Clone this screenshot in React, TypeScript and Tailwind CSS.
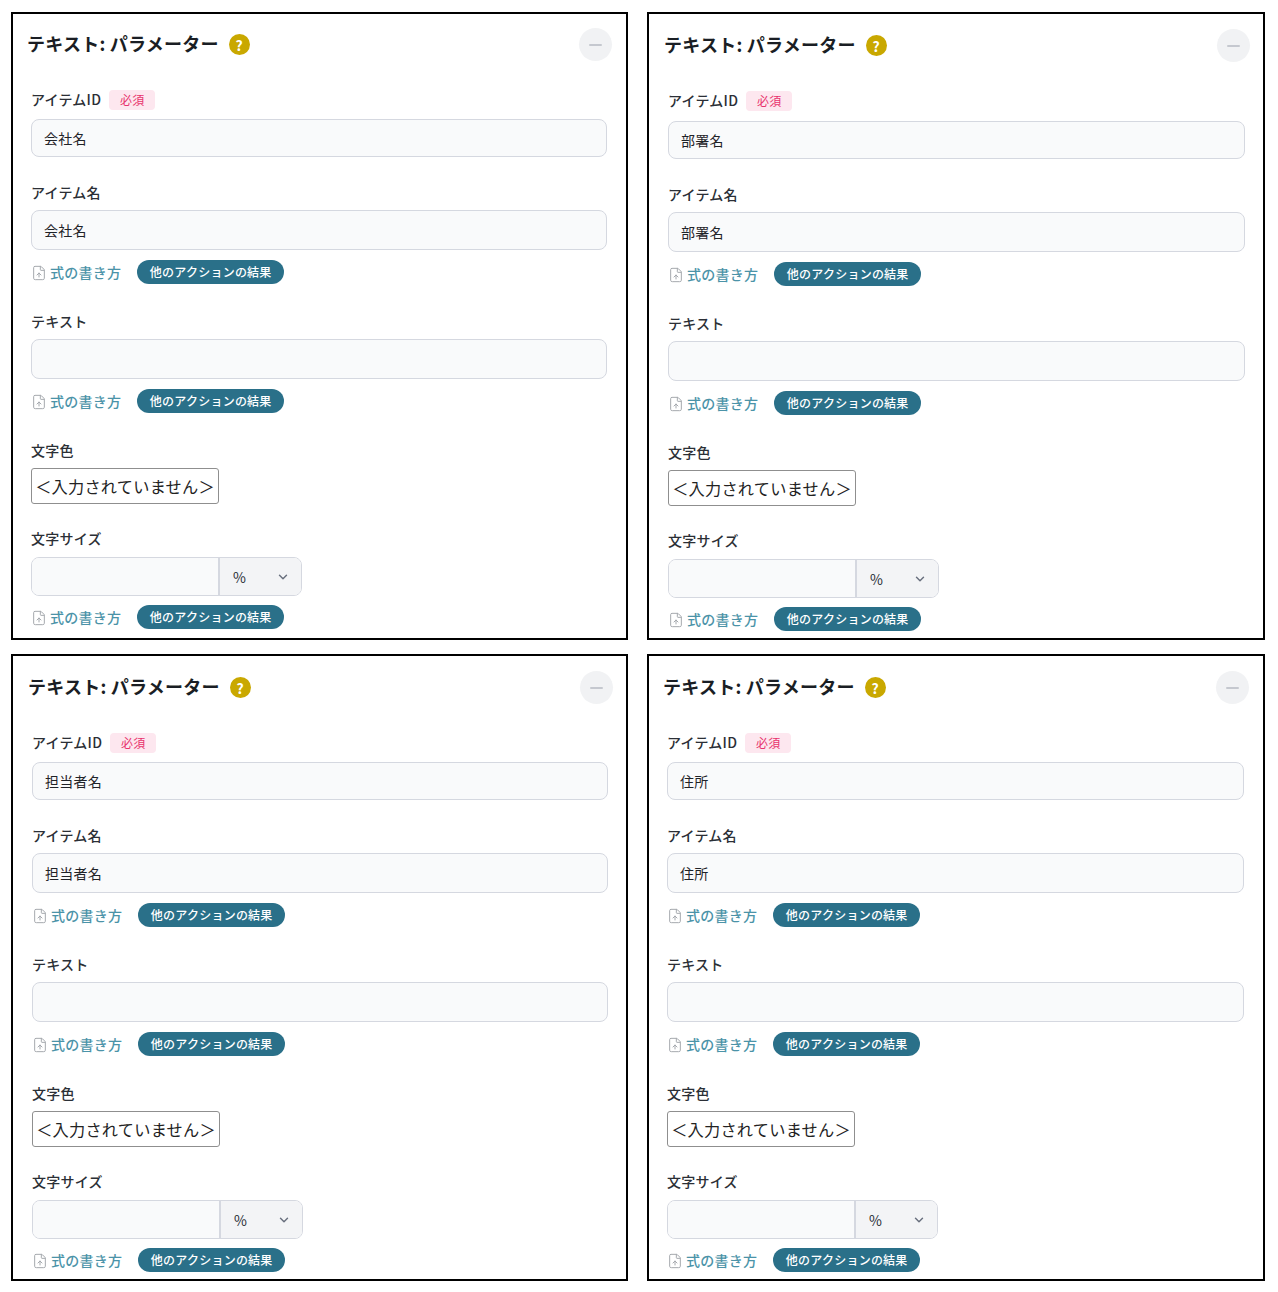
import { ChevronDown, FileUp } from "lucide-react";

const font = "font-['Noto_Sans_CJK_JP','Noto_Sans',sans-serif]";

function Label({ text, className }: { text: string; className: string }) {
  return <div className={`flex h-5 items-center pb-0.5 text-sm font-medium text-[#2b2f36] ${className}`}>{text}</div>;
}

function Field({ value, className }: { value?: string; className: string }) {
  return (
    <div className={`flex items-center rounded-lg border border-[#d5d8e0] bg-[#f9fafb] px-3 text-sm text-[#1f2328] ${className}`}>
      {value}
    </div>
  );
}

function Links({ className }: { className: string }) {
  return (
    <div className={`flex h-6 items-center ${className}`}>
      <FileUp size={16} strokeWidth={1.5} className="mt-0.5 mr-[3px] text-[#a5a9ae]" />
      <span className="text-sm font-medium text-[#4b93a8]">式の書き方</span>
      <span className="ml-4 flex h-6 w-[147px] items-center justify-center rounded-full bg-[#2a7089] text-xs font-medium text-white">
        他のアクションの結果
      </span>
    </div>
  );
}

type PanelProps = { name: string; className: string; firstGap: string };

function Panel({ name, className, firstGap }: PanelProps) {
  return (
    <div className={`flex flex-col border-2 border-black bg-white ${className}`}>
      <div className="-ml-1 -mr-[5px] flex h-[33px] items-center justify-between">
        <div className="flex items-center gap-2.5">
          <span className="pb-1 text-lg leading-none font-bold text-[#1a1e24]">テキスト: パラメーター</span>
          <span className="flex h-[21px] w-[21px] items-center justify-center rounded-full bg-[#c9a800] text-sm font-bold text-white">?</span>
        </div>
        <button className="flex h-[33px] w-[33px] items-center justify-center rounded-full bg-[#f1f2f4]">
          <span className="h-0.5 w-[13px] rounded bg-[#c5c8cf]" />
        </button>
      </div>

      <div className="mt-[29px] flex items-center">
        <Label text="アイテムID" className="" />
        <span className="ml-2 flex h-5 w-[46px] items-center justify-center rounded bg-[#fde7ef] text-xs text-[#e8336d]">必須</span>
      </div>
      <Field value={name} className={`h-[38px] ${firstGap}`} />

      <Label text="アイテム名" className="mt-[26px]" />
      <Field value={name} className="mt-[7px] h-10" />
      <Links className="mt-2.5" />

      <Label text="テキスト" className="mt-7" />
      <Field className="mt-[7px] h-10" />
      <Links className="mt-2.5" />

      <Label text="文字色" className="mt-7" />
      <div className="mt-[7px] flex h-9 w-[188px] items-center justify-center rounded-[3px] border border-[#8f8f8f] text-[16.2px] whitespace-nowrap text-[#222]">
        ＜入力されていません＞
      </div>

      <Label text="文字サイズ" className="mt-[25px]" />
      <div className="mt-2 flex h-[39px] w-[271px] overflow-hidden rounded-lg border border-[#d5d8e0]">
        <div className="w-[188px] border-r-2 border-[#d5d8e0] bg-[#f9fafb]" />
        <div className="flex flex-1 items-center justify-between bg-[#f3f4f6] pr-[11px] pl-[13px] text-sm text-[#2b2f36]">
          %
          <ChevronDown size={14} strokeWidth={2.5} className="text-[#6b7280]" />
        </div>
      </div>
      <Links className="mt-[9px]" />
    </div>
  );
}

export default function App() {
  return (
    <div className={`grid min-h-[1292px] grid-cols-[617px_618px] content-start gap-x-[19px] gap-y-3.5 bg-white pt-3 pl-[11px] tracking-[0.015em] ${font}`}>
      <Panel name="会社名" firstGap="mt-[9px]" className="h-[628px] pt-3.5 pr-[19px] pl-[18px]" />
      <Panel name="部署名" firstGap="mt-2.5" className="h-[628px] pt-[15px] pr-[18px] pl-[19px]" />
      <Panel name="担当者名" firstGap="mt-[9px]" className="h-[627px] pt-[15px] pr-[18px] pl-[19px]" />
      <Panel name="住所" firstGap="mt-[9px]" className="h-[627px] pt-[15px] pr-[19px] pl-[18px]" />
    </div>
  );
}
